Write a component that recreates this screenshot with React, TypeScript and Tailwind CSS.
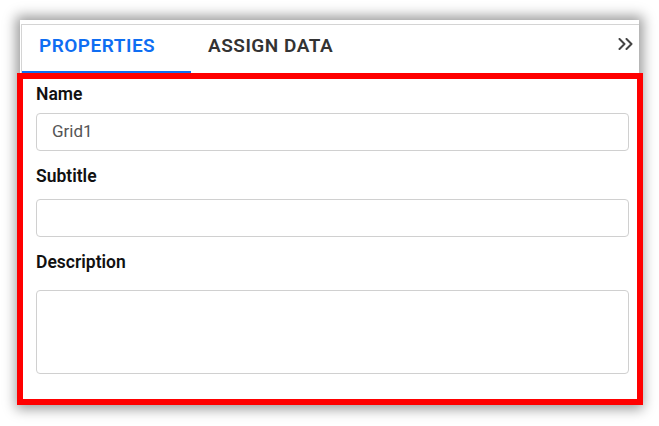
export default function App() {
  return (
    <div className="h-[426px] w-[659px] bg-white pl-[20px] pt-[20px]" style={{ fontFamily: "Roboto, 'Liberation Sans', sans-serif" }}>
      <div className="w-[619px] bg-white pt-[4px] shadow-[0_0_12px_4px_rgba(0,0,0,0.4)]">
        <div className="ml-[1px] flex h-[49px] border-l border-t border-[#d4d4d4]">
          <div className="flex w-[169px] flex-col border-b-2 border-[#0f6ef2]">
            <span className="pl-[17px] pt-[7px] text-[19px] font-semibold tracking-[0.5px] text-[#0f6ef2]">PROPERTIES</span>
          </div>
          <div className="flex flex-col">
            <span className="pl-[17px] pt-[7px] text-[19px] font-semibold tracking-[0.5px] text-[#333]">ASSIGN DATA</span>
          </div>
          <div className="ml-auto pr-[6px] pt-[13px]">
            <svg width="15" height="12" viewBox="0 0 15 12" fill="none" stroke="#444" strokeWidth="2" strokeLinecap="round" strokeLinejoin="round">
              <path d="M1.5 1 L6.5 6 L1.5 11" />
              <path d="M8.5 1 L13.5 6 L8.5 11" />
            </svg>
          </div>
        </div>
        <div className="-ml-[3px] w-[626px] border-[6px] border-[#ff0000] pb-[25px] pl-[13px] pr-[8px] pt-[5px]">
          <Label text="Name" />
          <div className="mt-[9px] flex h-[38px] items-center rounded-[4px] border border-[#d0d0d0] pl-[15px] text-[17px] text-[#555]">Grid1</div>
          <div className="mt-[15px]"><Label text="Subtitle" /></div>
          <div className="mt-[13px] h-[38px] rounded-[4px] border border-[#d0d0d0]" />
          <div className="mt-[15px]"><Label text="Description" /></div>
          <div className="mt-[18px] h-[84px] rounded-[4px] border border-[#d0d0d0]" />
        </div>
      </div>
    </div>
  );
}

function Label({ text }: { text: string }) {
  return <div className="h-[20px] text-[17.5px] font-semibold leading-[20px] text-[#111]">{text}</div>;
}
